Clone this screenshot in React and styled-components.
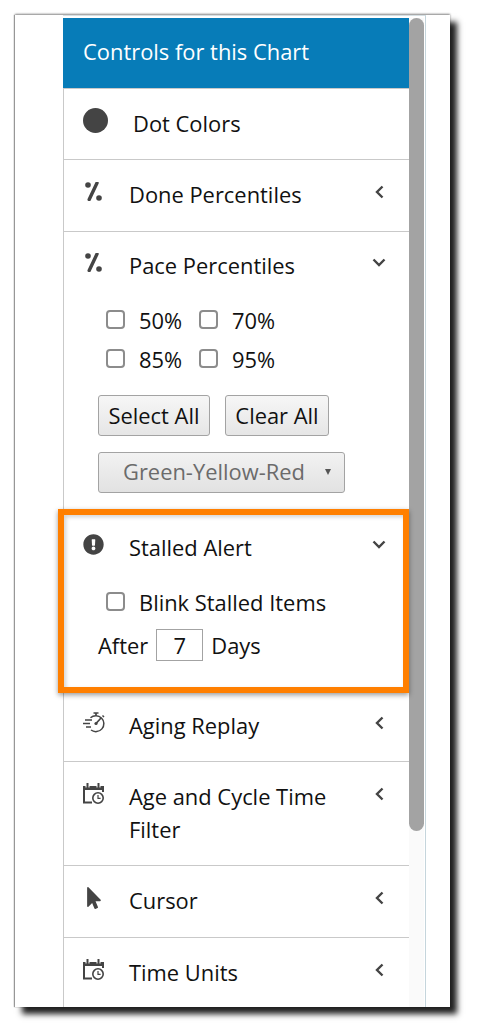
import React from "react";
import styled, { createGlobalStyle } from "styled-components";
import { FaExclamationCircle, FaMousePointer } from "react-icons/fa";

const Global = createGlobalStyle`
  html, body { margin: 0; padding: 0; background: #fff; overflow: hidden; }
  body { font-family: "Open Sans", "Liberation Sans", sans-serif; color: #111; }
`;

const Page = styled.div`
  width: 477px;
  height: 1034px;
  padding: 15px 27px 27px 15px;
  box-sizing: border-box;
`;
const Screen = styled.div`
  position: relative;
  width: 435px;
  height: 992px;
  background: #fff;
  overflow: hidden;
`;
const ShadowFrame = styled.div`
  width: 435px;
  height: 992px;
  box-shadow: 7px 7px 6px #1f1f1f, 0 -1px 2px #8a8a8a, -1px 0 1px #a0a0a0;
`;
const Frame = styled.div`
  display: flex;
  width: 363px;
  height: 992px;
  margin-left: 48px;
  padding-top: 2px;
  box-sizing: border-box;
  border-top: 1px solid #d5dfe3;
  border-right: 1px solid #c5d5dc;
`;
const Panel = styled.div`
  position: relative;
  width: 346px;
  flex: none;
  border-left: 1px solid #c9c9c9;
  box-sizing: border-box;
`;
const Track = styled.div`
  width: 15px;
  flex: none;
  background: #fafafa;
`;
const Thumb = styled.div`
  height: 813px;
  border-radius: 8px;
  background: #a3a3a3;
`;
const Header = styled.div`
  height: 70px;
  background: #077cb8;
  color: #fff;
  font-size: 21.9px;
  line-height: 68px;
  padding-left: 20px;
  margin-left: -1px;
  margin-bottom: 1px;
  box-shadow: 0 1px 0 #c9c9c9;
`;
const Section = styled.div`
  border-bottom: 1px solid #c9c9c9;
  min-height: ${(p) => p.$minH || 0}px;
  box-sizing: border-box;
`;
const Row = styled.div`
  display: flex;
  align-items: flex-start;
  padding: ${(p) => p.$top ?? 19}px 20px ${(p) => p.$bottom ?? 19}px 19px;
`;
const IconBox = styled.div`
  flex: none;
  width: ${(p) => p.$w || 46}px;
  height: 33px;
  color: #444;
  margin-top: -3px;
  display: flex;
  align-items: center;
`;
const Title = styled.div`
  flex: 1;
  font-size: 21.9px;
  line-height: 33px;
  padding-right: 30px;
`;
const Chevron = styled.div`
  flex: none;
  width: 14px;
  height: 33px;
  margin-top: -3px;
  margin-right: 3px;
  display: flex;
  align-items: center;
  justify-content: center;
`;
const Body = styled.div`
  padding-left: 34px;
`;
const CheckGrid = styled.div`
  display: grid;
  grid-template-columns: 93px 93px;
  row-gap: 6px;
  padding-left: 8px;
  margin-top: ${(p) => p.$top ?? 0}px;
`;
const CheckLabel = styled.label`
  display: flex;
  align-items: center;
  box-sizing: border-box;
  height: 33px;
  padding-top: 2px;
  font-size: 21.9px;
  white-space: nowrap;
  grid-column: ${(p) => (p.$wide ? "1 / 3" : "auto")};
`;
const Check = styled.input.attrs({ type: "checkbox" })`
  appearance: none;
  width: 19px;
  height: 19px;
  margin: -3px 14px 0 0;
  border: 2px solid #8c8c8c;
  border-radius: 4px;
  background: #fff;
  box-sizing: border-box;
  flex: none;
`;
const Buttons = styled.div`
  display: flex;
  gap: 15px;
  margin-top: 20px;
`;
const Btn = styled.button`
  box-sizing: border-box;
  height: 41px;
  width: ${(p) => p.$w}px;
  padding: 0 0 1px;
  font-family: inherit;
  font-size: 21.9px;
  color: #111;
  border: 1px solid #a3a3a3;
  border-radius: 3px;
  background: linear-gradient(#f6f6f6, #e6e6e6);
`;
const Select = styled.div`
  display: flex;
  align-items: center;
  justify-content: space-between;
  box-sizing: border-box;
  width: 247px;
  height: 41px;
  margin-top: 16px;
  padding: 0 13px 2px 24px;
  font-size: 21.9px;
  color: #6b6b6b;
  border: 1px solid #a3a3a3;
  border-radius: 3px;
  background: linear-gradient(#f2f2f2, #e2e2e2);
`;
const Caret = styled.span`
  width: 0;
  height: 0;
  border-left: 3.5px solid transparent;
  border-right: 3.5px solid transparent;
  border-top: 6px solid #555;
`;
const AfterRow = styled.div`
  display: flex;
  align-items: center;
  height: 32px;
  margin-top: 11px;
  font-size: 21.9px;
`;
const DaysInput = styled.input`
  box-sizing: border-box;
  width: 47px;
  height: 32px;
  margin: 0 8px 0 8px;
  border: 1px solid #a3a3a3;
  text-align: center;
  font: inherit;
  color: #111;
  padding: 0;
`;
const Callout = styled.div`
  position: absolute;
  left: -6px;
  top: 491px;
  width: 351px;
  height: 184px;
  box-sizing: border-box;
  border: 6.5px solid #ff7f00;
  box-shadow: 0 2px 5px rgba(0, 0, 0, 0.4), inset 2px 2px 4px rgba(0, 0, 0, 0.18);
  pointer-events: none;
`;

const Percent = () => (
  <svg width="19" height="19" viewBox="-2 0 19 19">
    <circle cx="3" cy="3" r="2.8" fill="#444" />
    <circle cx="14" cy="16" r="2.8" fill="#444" />
    <path d="M12 1 L4.2 17.5" stroke="#444" strokeWidth="3.4" strokeLinecap="round" />
  </svg>
);
const Dot = () => (
  <svg width="25" height="25" viewBox="0 0 25 25">
    <circle cx="12.5" cy="12.5" r="12.5" fill="#444" />
  </svg>
);
const Stopwatch = () => (
  <svg width="22" height="22" viewBox="0 0 22 22" fill="none" stroke="#444" strokeWidth="1.5">
    <path d="M10.5 1h5M13 1v2.5" strokeWidth="1.7" />
    <path d="M7.5 5.7A8 8 0 1 1 8 18" />
    <path d="M19.5 3.5l1.5 1.5" />
    <path d="M2 8h7M0 11.5h7M3 15h5" />
    <path d="M13 11.5L18 6" strokeWidth="1.7" />
    <circle cx="13" cy="11.5" r="1.6" fill="#444" stroke="none" />
  </svg>
);
const CalClock = () => (
  <svg width="21" height="21" viewBox="0 0 21 21" fill="none">
    <path d="M0 3h21v4H0z" fill="#444" />
    <path d="M4.5 0v3M15.5 0v3" stroke="#444" strokeWidth="2" />
    <path d="M3 3v1.5M6 3v1.5M14 3v1.5M17 3v1.5" stroke="#fff" strokeWidth="1" />
    <path d="M1 7v12.5h8M20 7v2" stroke="#444" strokeWidth="2" />
    <circle cx="15" cy="15" r="5.2" fill="#fff" stroke="#444" strokeWidth="1.6" />
    <path d="M15 12v3.3h2.6" stroke="#444" strokeWidth="1.2" />
  </svg>
);
const Left = () => (
  <svg width="9" height="14" viewBox="0 0 9 14" fill="none">
    <path d="M7.5 1.5 L2 7 L7.5 12.5" stroke="#444" strokeWidth="2.4" />
  </svg>
);
const Down = () => (
  <svg width="14" height="9" viewBox="0 0 14 9" fill="none">
    <path d="M1.5 1.5 L7 7 L12.5 1.5" stroke="#444" strokeWidth="2.4" />
  </svg>
);

export default function App() {
  return (
    <Page>
      <Global />
      <ShadowFrame>
        <Screen>
          <Frame>
            <Panel>
              <Header>Controls for this Chart</Header>
              <Section>
                <Row $top={18}>
                  <IconBox $w={50}><Dot /></IconBox>
                  <Title>Dot Colors</Title>
                </Row>
              </Section>
              <Section>
                <Row $top={18} $bottom={20}>
                  <IconBox><Percent /></IconBox>
                  <Title>Done Percentiles</Title>
                  <Chevron><Left /></Chevron>
                </Row>
              </Section>
              <Section $minH={278}>
                <Row $top={17}>
                  <IconBox><Percent /></IconBox>
                  <Title>Pace Percentiles</Title>
                  <Chevron><Down /></Chevron>
                </Row>
                <Body>
                  <CheckGrid $top={2}>
                    {["50%", "70%", "85%", "95%"].map((v) => (
                      <CheckLabel key={v}><Check />{v}</CheckLabel>
                    ))}
                  </CheckGrid>
                  <Buttons>
                    <Btn $w={112}>Select All</Btn>
                    <Btn $w={104}>Clear All</Btn>
                  </Buttons>
                  <Select>Green-Yellow-Red<Caret /></Select>
                </Body>
              </Section>
              <Section $minH={181}>
                <Row $top={21}>
                  <IconBox><FaExclamationCircle size={21} /></IconBox>
                  <Title>Stalled Alert</Title>
                  <Chevron><Down /></Chevron>
                </Row>
                <Body>
                  <CheckGrid $top={2}>
                    <CheckLabel $wide><Check />Blink Stalled Items</CheckLabel>
                  </CheckGrid>
                  <AfterRow>After<DaysInput defaultValue="7" />Days</AfterRow>
                </Body>
              </Section>
              <Section>
                <Row $top={18}>
                  <IconBox><Stopwatch /></IconBox>
                  <Title>Aging Replay</Title>
                  <Chevron><Left /></Chevron>
                </Row>
              </Section>
              <Section>
                <Row $top={18}>
                  <IconBox><CalClock /></IconBox>
                  <Title>Age and Cycle Time Filter</Title>
                  <Chevron><Left /></Chevron>
                </Row>
              </Section>
              <Section>
                <Row $top={18} $bottom={20}>
                  <IconBox><FaMousePointer size={22} /></IconBox>
                  <Title>Cursor</Title>
                  <Chevron><Left /></Chevron>
                </Row>
              </Section>
              <Section>
                <Row $top={18} $bottom={20}>
                  <IconBox><CalClock /></IconBox>
                  <Title>Time Units</Title>
                  <Chevron><Left /></Chevron>
                </Row>
              </Section>
              <Callout />
            </Panel>
            <Track><Thumb /></Track>
          </Frame>
        </Screen>
      </ShadowFrame>
    </Page>
  );
}
